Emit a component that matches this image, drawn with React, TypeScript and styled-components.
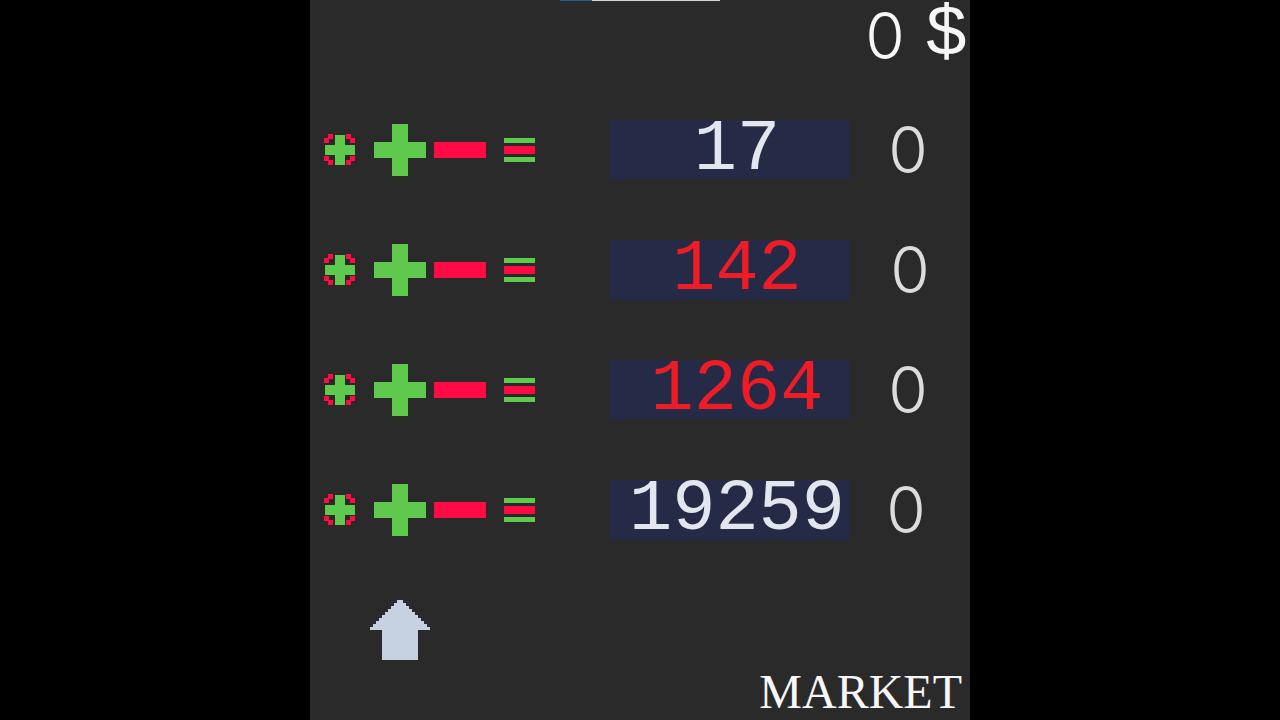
import React from 'react';
import styled, { createGlobalStyle } from 'styled-components';

const GREEN = '#5fc94e';
const RED = '#ff0a45';
const ROUND_FONT = "'Inter', 'Liberation Sans', sans-serif";

const GlobalStyle = createGlobalStyle`
  html, body {
    margin: 0;
    padding: 0;
    height: 100%;
    background: #000;
  }
`;

const Page = styled.div`
  display: flex;
  justify-content: center;
  width: 1280px;
  height: 720px;
  overflow: hidden;
  background: #000;
`;

const Panel = styled.main`
  position: relative;
  display: flex;
  flex-direction: column;
  width: 660px;
  height: 720px;
  background: #2a2a2a;
  font-family: 'Liberation Mono', monospace;
`;

const LoadBar = styled.div`
  position: absolute;
  top: 0;
  left: 250px;
  display: flex;
  width: 160px;
  height: 1px;
  background: #d5d8dc;
`;

const LoadFill = styled.div`
  height: 100%;
  background: #1a5f9c;
`;

const Balance = styled.header`
  display: flex;
  justify-content: flex-end;
  align-items: center;
  gap: 20px;
  height: 72px;
  padding-right: 2px;
  color: #f6f6f6;
`;

const BalanceZero = styled.span`
  font-family: ${ROUND_FONT};
  font-size: 64px;
  font-weight: 300;
  line-height: 72px;
`;

const Dollar = styled.span`
  font-size: 72px;
  line-height: 72px;
`;

const Rows = styled.section`
  display: flex;
  flex-direction: column;
  gap: 60px;
  margin-top: 48px;
`;

const Row = styled.div`
  display: flex;
  align-items: center;
  height: 60px;
  padding-left: 14px;
`;

const Controls = styled.div`
  display: flex;
  align-items: center;
  width: 286px;
`;

const IconButton = styled.button<{ $gap: number }>`
  display: block;
  flex: none;
  margin: 0 ${(p) => p.$gap}px 0 0;
  padding: 0;
  border: 0;
  background: none;
  line-height: 0;
`;

const ValueBox = styled.div<{ $alert: boolean }>`
  box-sizing: border-box;
  width: 240px;
  height: 60px;
  padding-left: 14px;
  background: #252a47;
  color: ${(p) => (p.$alert ? '#ee1c25' : '#e4e6ee')};
  font-size: 72px;
  line-height: 60px;
  text-align: center;
  white-space: nowrap;
`;

const Count = styled.div<{ $nudge: number }>`
  flex: 1;
  padding-right: ${(p) => p.$nudge}px;
  color: #dcdcdc;
  font-family: ${ROUND_FONT};
  font-size: 64px;
  font-weight: 300;
  line-height: 60px;
  text-align: center;
`;

const UpgradeButton = styled.button`
  display: block;
  align-self: flex-start;
  margin: 60px 0 0 60px;
  padding: 0;
  border: 0;
  background: none;
  line-height: 0;
`;

const MarketLabel = styled.div`
  position: absolute;
  right: 8px;
  bottom: 4px;
  color: #f6f6f6;
  font-family: 'Liberation Serif', serif;
  font-size: 48px;
  line-height: 48px;
`;

const CORNER = 'M4 0h5v5H5v4H0V4h4z';

const SmallPlus = () => (
  <svg width="32" height="32" viewBox="0 0 32 32" shapeRendering="crispEdges">
    <g fill={RED}>
      <path d={CORNER} />
      <path d={CORNER} transform="matrix(-1 0 0 1 31 0)" />
      <path d={CORNER} transform="matrix(1 0 0 -1 0 31)" />
      <path d={CORNER} transform="matrix(-1 0 0 -1 31 31)" />
    </g>
    <path fill={GREEN} d="M11 1h10v10h10v10H21v10H11V21H1V11h10z" />
  </svg>
);

const BigPlus = () => (
  <svg width="52" height="52" viewBox="0 0 52 52" shapeRendering="crispEdges">
    <path fill={GREEN} d="M18 0h16v18h18v16H34v18H18V34H0V18h18z" />
  </svg>
);

const Minus = () => (
  <svg width="52" height="16" viewBox="0 0 52 16" shapeRendering="crispEdges">
    <rect width="52" height="16" fill={RED} />
  </svg>
);

const Equals = () => (
  <svg width="31" height="24" viewBox="0 0 31 24" shapeRendering="crispEdges">
    <rect width="31" height="5" fill={GREEN} />
    <rect y="8" width="31" height="8" fill={RED} />
    <rect y="19" width="31" height="5" fill={GREEN} />
  </svg>
);

const UpArrow = () => (
  <svg width="60" height="60" viewBox="0 0 60 60" shapeRendering="crispEdges">
    <path
      fill="#c6d2e2"
      d="M27 0h6v3h3v3h3v3h3v3h3v3h3v3h3v3h3v3h3v3h3v3H48v30H12V30H0v-3h3v-3h3v-3h3v-3h3v-3h3v-3h3V9h3V6h3V3h3z"
    />
  </svg>
);

const ROWS = [
  { value: 17, alert: false, nudge: 4 },
  { value: 142, alert: true, nudge: 0 },
  { value: 1264, alert: true, nudge: 4 },
  { value: 19259, alert: false, nudge: 8 },
];

export default function App() {
  return (
    <Page>
      <GlobalStyle />
      <Panel>
        <LoadBar>
          <LoadFill style={{ width: '20%' }} />
        </LoadBar>
        <Balance>
          <BalanceZero>0</BalanceZero>
          <Dollar>$</Dollar>
        </Balance>
        <Rows>
          {ROWS.map((row) => (
            <Row key={row.value}>
              <Controls>
                <IconButton $gap={18}>
                  <SmallPlus />
                </IconButton>
                <IconButton $gap={8}>
                  <BigPlus />
                </IconButton>
                <IconButton $gap={18}>
                  <Minus />
                </IconButton>
                <IconButton $gap={0}>
                  <Equals />
                </IconButton>
              </Controls>
              <ValueBox $alert={row.alert}>{row.value}</ValueBox>
              <Count $nudge={row.nudge}>0</Count>
            </Row>
          ))}
        </Rows>
        <UpgradeButton>
          <UpArrow />
        </UpgradeButton>
        <MarketLabel>MARKET</MarketLabel>
      </Panel>
    </Page>
  );
}
